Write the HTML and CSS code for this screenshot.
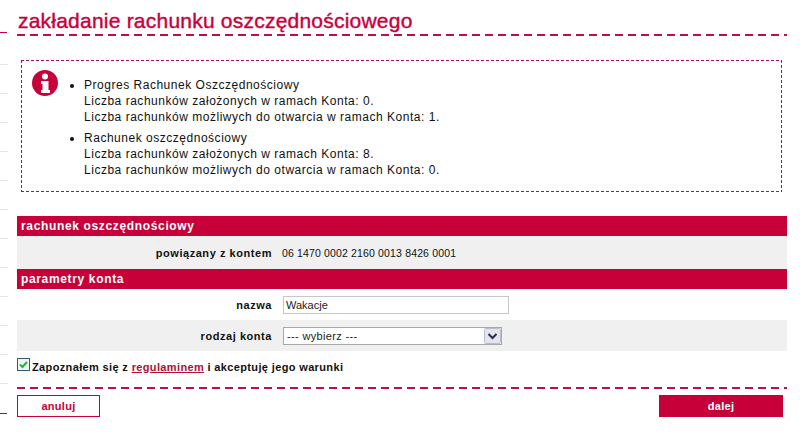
FILE: index.html
```html
<!DOCTYPE html>
<html lang="pl">
<head>
<meta charset="utf-8">
<title>zakładanie rachunku oszczędnościowego</title>
<link rel="stylesheet" href="styles.css">
</head>
<body>
<div class="page">
  <div class="rail"></div>
  <main class="main">
    <h1 class="title">zakładanie rachunku oszczędnościowego</h1>
    <div class="info">
      <svg class="info-icon" width="26" height="26" viewBox="0 0 26 26"><circle cx="13" cy="13" r="13" fill="#c8003a"/><circle cx="13" cy="6.500" r="3" fill="#fff"/><path d="M9 11h7.500v9h1.500v3h-9v-3h1.500v-6h-1.500z" fill="#fff"/></svg>
      <ul class="info-list">
        <li>Progres Rachunek Oszczędnościowy<br>Liczba rachunków założonych w ramach Konta: 0.<br>Liczba rachunków możliwych do otwarcia w ramach Konta: 1.</li>
        <li>Rachunek oszczędnościowy<br>Liczba rachunków założonych w ramach Konta: 8.<br>Liczba rachunków możliwych do otwarcia w ramach Konta: 0.</li>
      </ul>
    </div>
    <form class="form">
      <h2 class="section">rachunek oszczędnościowy</h2>
      <div class="row row-grey row-tall">
        <span class="label">powiązany z kontem</span>
        <span class="value">06 1470 0002 2160 0013 8426 0001</span>
      </div>
      <h2 class="section">parametry konta</h2>
      <div class="row">
        <label class="label" for="nazwa">nazwa</label>
        <input class="text-input" id="nazwa" type="text" value="Wakacje">
      </div>
      <div class="row row-grey">
        <label class="label" for="rodzaj">rodzaj konta</label>
        <div class="select-wrap">
          <select class="select" id="rodzaj"><option>--- wybierz ---</option></select>
          <svg class="select-arrow" width="17" height="16" viewBox="0 0 17 16"><rect x=".5" y=".5" width="16" height="15" rx="1" fill="#e2e4ee" stroke="#b9bccb"/><path d="M4.500 6l4 4 4-4" fill="none" stroke="#2a2d48" stroke-width="2"/></svg>
        </div>
      </div>
      <div class="accept">
        <svg class="check" width="13" height="13" viewBox="0 0 13 13"><rect x=".5" y=".5" width="12" height="12" fill="#eef5ee" stroke="#2c5a78"/><path d="M3 6.500l2.500 2.500 4.500-5" fill="none" stroke="#22b14c" stroke-width="2"/></svg>
        <span>Zapoznałem się z <a class="link" href="#">regulaminem</a> i akceptuję jego warunki</span>
      </div>
      <div class="actions">
        <button class="btn btn-cancel" type="button">anuluj</button>
        <button class="btn btn-next" type="button">dalej</button>
      </div>
    </form>
  </main>
</div>
</body>
</html>
```
FILE: styles.css
```css
* { box-sizing: border-box; }
html, body { margin: 0; padding: 0; background: #fff; }
body { font-family: "Liberation Sans", Arial, sans-serif; font-size: 11px; color: #000; height: 441px; overflow: hidden; }
.page { display: flex; height: 441px; }
.rail {
  width: 17px; flex: none;
  background:
    linear-gradient(#c8003a, #c8003a) 0 32px / 7px 1px no-repeat,
    linear-gradient(#c8003a, #c8003a) 0 413px / 7px 1px no-repeat,
    linear-gradient(#e4e4e4, #e4e4e4) 0 64px / 8px 1px no-repeat,
    linear-gradient(#e4e4e4, #e4e4e4) 0 93px / 8px 1px no-repeat,
    linear-gradient(#e4e4e4, #e4e4e4) 0 122px / 8px 1px no-repeat,
    linear-gradient(#e4e4e4, #e4e4e4) 0 151px / 8px 1px no-repeat,
    linear-gradient(#e4e4e4, #e4e4e4) 0 180px / 8px 1px no-repeat,
    linear-gradient(#e4e4e4, #e4e4e4) 0 209px / 8px 1px no-repeat,
    linear-gradient(#e4e4e4, #e4e4e4) 0 238px / 8px 1px no-repeat,
    linear-gradient(#e4e4e4, #e4e4e4) 0 267px / 8px 1px no-repeat,
    linear-gradient(#e4e4e4, #e4e4e4) 0 296px / 8px 1px no-repeat,
    linear-gradient(#e4e4e4, #e4e4e4) 0 325px / 8px 1px no-repeat,
    linear-gradient(#e4e4e4, #e4e4e4) 0 354px / 8px 1px no-repeat,
    linear-gradient(#e4e4e4, #e4e4e4) 0 383px / 8px 1px no-repeat;
}
.main { width: 770px; flex: none; }
.title {
  margin: 0; height: 36px; padding: 9px 0 0 1px;
  font-size: 21px; line-height: 24px; font-weight: 400; color: #c8003a;
  letter-spacing: .22px;
  -webkit-text-stroke: 0.4px #c8003a;
  background: repeating-linear-gradient(90deg, #b8104a 0 8px, transparent 8px 13px) 0 100% / 100% 2px no-repeat;
}
.info {
  margin: 24px 5px 0 4px; height: 132px;
  display: flex; padding: 10px 0 0 11px;
  --dot-x: repeating-linear-gradient(90deg, #a01060 0 3px, transparent 3px 5px);
  --dot-y: repeating-linear-gradient(180deg, #a01060 0 3px, transparent 3px 5px);
  background:
    var(--dot-x) 0 0 / 100% 1px no-repeat,
    var(--dot-x) 0 100% / 100% 1px no-repeat,
    var(--dot-y) 0 0 / 1px 100% no-repeat,
    var(--dot-y) 100% 0 / 1px 100% no-repeat;
}
.info-icon { flex: none; }
.info-list { margin: 0; padding: 7px 0 0 26px; list-style: disc; font-size: 12px; line-height: 16px; letter-spacing: .52px; color: #111; }
.info-list li { margin-bottom: 5px; }
.form { margin-top: 24px; }
.section {
  margin: 0; height: 20px; background: #c8003a; color: #fff;
  font-size: 12px; line-height: 21px; font-weight: 700; padding-left: 4px; letter-spacing: .65px;
}
.row { display: grid; grid-template-columns: 255px 1fr; column-gap: 11px; align-items: center; height: 31px; }
.row-tall { height: 33px; column-gap: 10px; }
.row-grey { background: #f0f0f0; }
.label { text-align: right; font-weight: 700; color: #111; letter-spacing: .55px; }
.value { font-size: 10.500px; color: #111; letter-spacing: .15px; }
.text-input {
  width: 226px; height: 18px; border: 1px solid #c4c8c4; background: #fff;
  font: 11px "Liberation Sans", Arial, sans-serif; color: #222; padding: 0 2px; margin: 0;
}
.select-wrap { position: relative; width: 219px; height: 18px; }
.select {
  appearance: none; width: 100%; height: 100%; margin: 0;
  border: 1px solid #a8a8a8; border-radius: 0; background: #fff;
  font: 11px "Liberation Sans", Arial, sans-serif; letter-spacing: .35px; color: #222; padding: 0 3px;
}
.select-arrow { position: absolute; right: 1px; top: 1px; }
.accept { display: flex; align-items: center; gap: 2px; height: 31px; font-weight: 700; color: #111; letter-spacing: .36px; }
.check { flex: none; margin-top: -4px; }
.link { color: #b00f3a; }
.actions {
  display: flex; justify-content: space-between;
  margin-top: 5px; padding: 8px 4px 0 0;
  background: repeating-linear-gradient(90deg, #b8104a 0 8px, transparent 8px 13px) 0 0 / 100% 2px no-repeat;
}
.btn { height: 22px; font: 700 11px "Liberation Sans", Arial, sans-serif; letter-spacing: .3px; padding: 0; border-radius: 0; cursor: pointer; }
.btn-cancel { width: 83px; background: #fff; border: 1px solid #c8003a; color: #c8003a; }
.btn-next { width: 124px; background: #c8003a; border: 0; color: #fff; }
```
